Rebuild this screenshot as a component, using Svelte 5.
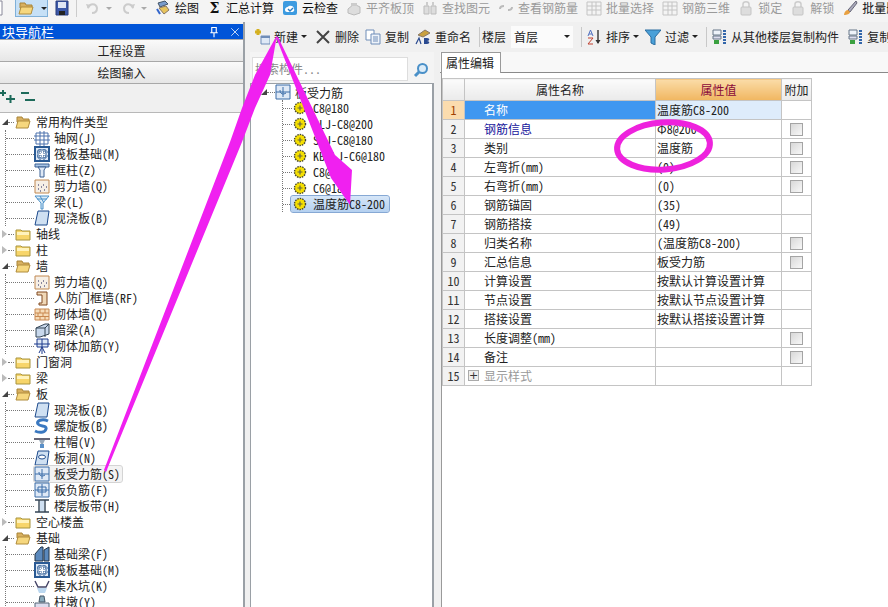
<script>
  const icons = {
    page: '<path d="M2 1h11v14H2z" fill="#fff" stroke="#889"/>',
    open: '<path d="M2 3h5l1 2h6v3H2z" fill="#d8b060" stroke="#a98436"/><path d="M1 14l2-7h12l-2 7z" fill="#f6d77e" stroke="#b08c3c"/>',
    closed: '<path d="M1 4h5l1 1h8v9H1z" fill="#f7d56a" stroke="#a8943f"/><path d="M2 6h12v3H2z" fill="#fff3bd"/>',
    save: '<path d="M2 1h12v14H2z" fill="#3c58a8" stroke="#283c7c"/><path d="M4 2h8v6H4z" fill="#dfe6f4"/><path d="M5 11h6v4H5z" fill="#222"/>',
    undo: '<path d="M3 8c2-5 8-5 9 0 0 3-2 5-5 5" fill="none" stroke="#ccc" stroke-width="2"/><path d="M1 4l5 1-3 4z" fill="#ccc"/>',
    redo: '<path d="M13 8c-2-5-8-5-9 0 0 3 2 5 5 5" fill="none" stroke="#ccc" stroke-width="2"/><path d="M15 4l-5 1 3 4z" fill="#ccc"/>',
    draw: '<path d="M3 3l7-2 3 3-8 3z" fill="#7a9ccc" stroke="#456"/><path d="M4 8l5 6 5-4-3-4z" fill="#e8c45c" stroke="#876"/><path d="M2 9l3 5" stroke="#36c" stroke-width="2"/>',
    cloud: '<rect x="1" y="1" width="14" height="14" rx="2" fill="#3d9be0"/><path d="M3 10c0-3 3-3 4-4 2-1 5 0 5 3 1 2-1 3-2 3H5c-1 0-2-1-2-2z" fill="#fff"/><path d="M6 9l2 2 3-3" fill="none" stroke="#2b7bc0" stroke-width="1.4"/>',
    dim: '<path d="M2 9l6-5 6 3v6l-6 2-6-2z" fill="#ddd" stroke="#bbb"/><path d="M5 3h6v3H5z" fill="#ccc"/>',
    bino: '<path d="M2 6h5v8H2zM9 6h5v8H9z" fill="#ddd" stroke="#bbb"/><path d="M4 2h2v4H4zM10 2h2v4h-2z" fill="#ccc"/>',
    link: '<path d="M2 9c0-3 3-3 4-3M14 7c0 3-3 3-4 3" fill="none" stroke="#bbb" stroke-width="2"/>',
    gridgrey: '<path d="M1 2h14v13H1zM1 6h14M1 10h14M6 2v13M10 2v13" fill="#f4f4f4" stroke="#c4c4c4"/>',
    lock: '<path d="M5 7V4c0-3 6-3 6 0v3" fill="none" stroke="#ccc" stroke-width="1.5"/><rect x="3" y="7" width="10" height="8" rx="1" fill="#ddd" stroke="#c4c4c4"/>',
    brush: '<path d="M14 1L6 10l2 2 7-9z" fill="#aab" stroke="#667"/><path d="M2 15c0-3 2-5 4-5l2 2c0 2-3 3-6 3z" fill="#e8a040"/>',
    add: '<path d="M1 3h6M4 0v6" stroke="#d4b020" stroke-width="3"/><path d="M7 7h9v8H7z" fill="#dfe9f6" stroke="#6f8db8"/><path d="M7 7h9v2H7z" fill="#6f8db8"/>',
    del: '<path d="M2 2l12 12M14 2L2 14" stroke="#444" stroke-width="2"/>',
    copy: '<path d="M1 1h8v10H1z" fill="#fff" stroke="#6f8db8"/><path d="M6 5h9v10H6z" fill="#eef3fa" stroke="#6f8db8"/><path d="M8 8h5M8 10h5M8 12h5" stroke="#6f8db8"/>',
    rename: '<path d="M3 6l7-5 5 3-7 4z" fill="#c8a040" stroke="#876"/><path d="M1 15l3-6 2 6" fill="none" stroke="#2a4a90" stroke-width="1.2"/><path d="M9 9h3c3 0 3 3 0 3 3 0 3 3 0 3H9z" fill="#2a4a90"/>',
    sort: '<path d="M2 7l2.500-6L7 7M3 5h3" fill="none" stroke="#5070c0"/><path d="M2 9h5l-5 6h5" fill="none" stroke="#c04030"/><path d="M12 1v13" stroke="#333" stroke-width="1.400"/><path d="M9.500 11l2.500 4 2.500-4z" fill="#333"/>',
    filter: '<path d="M0 1h16l-6 7v8l-4-2V8z" fill="#4aa0d8" stroke="#2a6ca0"/>',
    floor: '<path d="M2 1h8v5H2z" fill="#eef3fa" stroke="#678"/><path d="M2 7h8v3H2z" fill="#dde" stroke="#678"/><path d="M3 11h5v4H3z" fill="#3aa040"/><path d="M12 2h3M12 5h3M12 8h3M12 11h3M12 14h3" stroke="#36a" stroke-width="2"/>',
    net: '<path d="M2 3h12v11H2zM6 1v15M10 1v15M0 6h16M0 10h16" fill="none" stroke="#4a70ac"/>',
    raft: '<path d="M1 1h14v14H1z" fill="#dfe9f6" stroke="#2a5a94" stroke-width="2"/><path d="M4 4h8v8H4z" fill="#fff" stroke="#2a5a94"/><path d="M1 6h14M1 10h14M6 1v14M10 1v14" stroke="#2a5a94" stroke-dasharray="1 1"/>',
    col: '<path d="M1 2h14v3H1z" fill="#a8c4e4" stroke="#3a6094"/><path d="M4 5h8l-2 3v7H6V8z" fill="#dfe9f6" stroke="#3a6094"/>',
    wall: '<path d="M1 2h14v13H1z" fill="#f6efe6" stroke="#c08850"/><path d="M4 11h1M7 9h1M10 12h1M6 13h1M9 7h1M12 9h1M4 7h1" stroke="#668" stroke-width="1.500"/>',
    beam: '<path d="M1 2h14L9 9v6H7V9z" fill="#dcecf8" stroke="#4a90c8"/><path d="M3 5h10M6 2l4 7" stroke="#4a90c8"/>',
    slab: '<path d="M4 1h11l-2 14H1z" fill="#cfe0f2" stroke="#1d4a8c"/>',
    door: '<path d="M3 2h10v13H5v-2h3V5H3z" fill="#f0d8b8" stroke="#804820"/>',
    brick: '<path d="M1 3h14v11H1z" fill="#f6dcb8" stroke="#c88850"/><path d="M1 7h14M1 10.500h14M6 3v4M11 3v4M4 7v3.500M9 7v3.500M6 10.500V14M11 10.500V14" stroke="#c88850"/>',
    hbeam: '<path d="M2 6l9-4h4v10l-9 3H2z" fill="#c8d8ec" stroke="#345"/><path d="M2 6h9v9M11 6l4-4" fill="none" stroke="#345"/>',
    masonry: '<path d="M3 1h11v8H3z" fill="#dfe9f6" stroke="#1d3a8c"/><path d="M0 6h16M8 1v15M5 15l3-6 3 6" fill="none" stroke="#1d3a8c"/>',
    spiral: '<path d="M14 3C8 0 2 3 4 6s9 1 8 5-7 4-11 2" fill="none" stroke="#3a78c0" stroke-width="3"/>',
    cap: '<path d="M0 4h16v2H0z" fill="#667"/><path d="M5 6h6L9 10H7z" fill="#9ab"/><path d="M6 10h4v4H6z" fill="#5a90c8"/>',
    hole: '<path d="M4 1h11l-2 14H1z" fill="#cfe0f2" stroke="#1d4a8c"/><ellipse cx="8" cy="7" rx="3.500" ry="2" fill="#fff" stroke="#1d4a8c"/>',
    rebar: '<path d="M1 1h14v14H1z" fill="#dfe9f6" stroke="#3a6ca8"/><path d="M1 8h14M8 3v10" stroke="#3a6ca8"/><path d="M5 6c0 4 3 5 6 3" fill="none" stroke="#3a6ca8"/>',
    neg: '<path d="M1 1h14v14H1z" fill="#dfe9f6" stroke="#3a6ca8"/><path d="M4 5h8v5H4zM1 8h14M8 2v12" fill="none" stroke="#3a6ca8"/>',
    band: '<path d="M1 2h14M1 14h14M5 2v12M11 2v12" stroke="#345" stroke-width="1.400"/><path d="M6 3h4v10H6z" fill="#cfe0f2"/>',
    fbeam: '<path d="M1 15V8l6-7h2v14zM10 15V4l5-3v14z" fill="#5a88bc" stroke="#234"/>',
    pit: '<path d="M1 3l3 6h8l3-6" fill="none" stroke="#446" stroke-width="1.400"/><path d="M3 10h10l-2 5H5z" fill="#bcd8f0"/>',
    pier: '<path d="M6 2h4l1 6H5z" fill="#8ab" stroke="#456"/><path d="M1 9h14v6H1z" fill="#dde" stroke="#567"/>',
    gear: '<circle cx="8" cy="8" r="5.500" fill="#f6e000" stroke="#443" stroke-width="1.400" stroke-dasharray="1.500 1"/><path d="M5.500 8h5M8 5.500v5" stroke="#664" stroke-width="1.200"/>',
    search: '<circle cx="9.500" cy="6.500" r="4.500" fill="#dcecf8" stroke="#4a90c8" stroke-width="2"/><path d="M6 10l-4 4" stroke="#4a90c8" stroke-width="3"/>',
    pin: '<path d="M5 2h6v7H5zM3 9h10M8 9v6" fill="none" stroke="#fff" stroke-width="1.500"/>',
    close: '<path d="M3 3l10 10M13 3L3 13" stroke="#fff" stroke-width="1"/>',
    expand: '<path d="M0 4h6M3 1v6M6 10h9M10.500 6v8" stroke="#1d6a5a" stroke-width="2"/>',
    collapse: '<path d="M1 4h8M5 11h10" stroke="#1d6a5a" stroke-width="2"/>'
  };

  const topItems = [
    ['draw', '绘图', false], ['', '汇总计算', false], ['cloud', '云检查', false],
    ['dim', '平齐板顶', true], ['bino', '查找图元', true], ['link', '查看钢筋量', true],
    ['gridgrey', '批量选择', true], ['gridgrey', '钢筋三维', true], ['lock', '锁定', true],
    ['lock', '解锁', true], ['brush', '批量删除', false]
  ];

  const tree = [
    { label: '常用构件类型', open: true, items: [['net', '轴网(J)'], ['raft', '筏板基础(M)'], ['col', '框柱(Z)'], ['wall', '剪力墙(Q)'], ['beam', '梁(L)'], ['slab', '现浇板(B)']] },
    { label: '轴线' }, { label: '柱' },
    { label: '墙', open: true, items: [['wall', '剪力墙(Q)'], ['door', '人防门框墙(RF)'], ['brick', '砌体墙(Q)'], ['hbeam', '暗梁(A)'], ['masonry', '砌体加筋(Y)']] },
    { label: '门窗洞' }, { label: '梁' },
    { label: '板', open: true, items: [['slab', '现浇板(B)'], ['spiral', '螺旋板(B)'], ['cap', '柱帽(V)'], ['hole', '板洞(N)'], ['rebar', '板受力筋(S)', true], ['neg', '板负筋(F)'], ['band', '楼层板带(H)']] },
    { label: '空心楼盖' },
    { label: '基础', open: true, items: [['fbeam', '基础梁(F)'], ['raft', '筏板基础(M)'], ['pit', '集水坑(K)'], ['pier', '柱墩(Y)']] }
  ];

  const parts = ['C8@180', 'SLJ-C8@200', 'SLJ-C8@180', 'KBSLJ-C6@180', 'C8@180', 'C6@180'];

  const rows = [
    ['名称', '温度筋C8-200', false], ['钢筋信息', 'Φ8@200', true], ['类别', '温度筋', true],
    ['左弯折(mm)', '(0)', true], ['右弯折(mm)', '(0)', true], ['钢筋锚固', '(35)', false],
    ['钢筋搭接', '(49)', false], ['归类名称', '(温度筋C8-200)', true], ['汇总信息', '板受力筋', true],
    ['计算设置', '按默认计算设置计算', false], ['节点设置', '按默认节点设置计算', false], ['搭接设置', '按默认搭接设置计算', false],
    ['长度调整(mm)', '', true], ['备注', '', true], ['显示样式', '', false]
  ];
</script>

{#snippet icon(name)}
  <svg class="ic" viewBox="0 0 16 16">{@html icons[name]}</svg>
{/snippet}

<div class="app">
  <div class="topbar">
    <span class="stub">{@render icon('page')}</span>
    <span class="openbtn">{@render icon('open')}<i class="div"></i><i class="caret"></i></span>
    <span class="save">{@render icon('save')}</span>
    <i class="sep"></i>
    <span class="hist">{@render icon('undo')}<i class="caret pale"></i></span>
    <span class="hist">{@render icon('redo')}<i class="caret pale"></i></span>
    {#each topItems as [ic, label, off]}
      <span class="tool" class:off>
        {#if ic}{@render icon(ic)}{:else}<b class="sigma">Σ</b>{/if}
        {label}
      </span>
    {/each}
  </div>

  <div class="main">
    <aside class="nav">
      <div class="nav-title"><span>块导航栏</span><span class="nav-btns">{@render icon('pin')}{@render icon('close')}</span></div>
      <div class="nav-tab">工程设置</div>
      <div class="nav-tab">绘图输入</div>
      <div class="nav-tools">{@render icon('expand')}{@render icon('collapse')}</div>
      <div class="tree">
        {#each tree as group}
          <div class="folder">
            <i class="tri" class:down={group.open}></i><i class="stub-h short"></i>
            {@render icon(group.open ? 'open' : 'closed')}
            <span>{group.label}</span>
          </div>
          {#if group.open}
            <div class="kids">
              {#each group.items as [ic, label, hover]}
                <div class="kid">
                  <i class="stub-h"></i>
                  <span class="kid-body" class:hover>{@render icon(ic)}<span>{label}</span></span>
                </div>
              {/each}
            </div>
          {/if}
        {/each}
      </div>
    </aside>

    <div class="work">
      <div class="bar">
        <span class="t">{@render icon('add')}新建<i class="caret"></i></span>
        <span class="t">{@render icon('del')}删除</span>
        <span class="t">{@render icon('copy')}复制</span>
        <span class="t">{@render icon('rename')}重命名</span>
        <i class="sep2"></i>
        <span class="lbl">楼层</span>
        <span class="floor"><span>首层</span><i class="caret"></i></span>
        <i class="sep2 more"></i>
        <span class="t">{@render icon('sort')}排序<i class="caret"></i></span>
        <span class="t">{@render icon('filter')}过滤<i class="caret"></i></span>
        <i class="sep2 more"></i>
        <span class="t last">{@render icon('floor')}从其他楼层复制构件</span>
        <span class="t">{@render icon('floor')}复制构件到其他楼层</span>
      </div>

      <div class="panes">
        <section class="list">
          <div class="search">
            <span class="search-box">搜索构件...</span>
            <span class="search-btn">{@render icon('search')}</span>
          </div>
          <div class="list-tree">
            <div class="root"><i class="tri down"></i><i class="stub-h root-stub"></i>{@render icon('rebar')}<span>板受力筋</span></div>
            <div class="parts">
              {#each parts as p}
                <div class="part"><i class="stub-h"></i>{@render icon('gear')}<span>{p}</span></div>
              {/each}
              <div class="part"><i class="stub-h"></i><span class="part-sel">{@render icon('gear')}<span>温度筋C8-200</span></span></div>
            </div>
          </div>
        </section>

        <section class="props">
          <div class="tabs"><span class="tab">属性编辑</span></div>
          <div class="sheet">
            <table>
              <thead>
                <tr><th class="idx"></th><th class="nm">属性名称</th><th class="val">属性值</th><th class="ad">附加</th></tr>
              </thead>
              <tbody>
                {#each rows as [name, value, check], i}
                  <tr class:sel={i === 0}>
                    <td class="idx">{i + 1}</td>
                    <td class="nm" class:link={i === 1} class:muted={i === 14}>
                      {#if i === 14}<i class="plus">+</i>{/if}{name}
                    </td>
                    <td class="val">{value}</td>
                    <td class="ad">{#if check}<i class="check"></i>{/if}</td>
                  </tr>
                {/each}
              </tbody>
            </table>
          </div>
        </section>
      </div>
    </div>
  </div>

  <svg class="marks" viewBox="0 0 888 607">
    <path d="M277 35L270 75 255 108 242 142 106 472 104 470 230 142 242 108 255 75Z" fill="#f020f0" />
    <path d="M276 37L278 37 335 155 352 170 350 205 331 178 324 160Z" fill="#f020f0" />
    <ellipse cx="663.500" cy="146" rx="46.500" ry="23.500" transform="rotate(-4 663.500 146)" fill="none" stroke="#ee22dd" stroke-width="6" />
  </svg>
</div>

<style>
  :global(body) {
    margin: 0;
  }

  .app {
    position: relative;
    width: 888px;
    height: 607px;
    overflow: hidden;
    background: #f0f0f0;
    color: #222;
    font: 12px/16px "Noto Sans CJK SC", "Liberation Sans", sans-serif;
    font-feature-settings: "hwid";
  }

  i {
    font-style: normal;
  }

  .ic {
    width: 16px;
    height: 16px;
    flex: none;
    display: block;
  }

  .topbar {
    height: 22px;
    display: flex;
    align-items: flex-start;
    white-space: nowrap;
    background: #f4f4f4;
  }

  .topbar > * {
    flex: none;
  }

  .stub {
    margin: 0 10px 0 -11px;
  }

  .openbtn {
    width: 33px;
    height: 17px;
    box-sizing: border-box;
    display: flex;
    align-items: center;
    gap: 2px;
    padding-left: 2px;
    background: #c6e0f6;
    border: 1px solid #7fb0d8;
    border-top: 0;
  }

  .div {
    width: 1px;
    height: 16px;
    background: #7fb0d8;
    margin-right: 3px;
  }

  .caret {
    width: 0;
    height: 0;
    flex: none;
    border: 3px solid transparent;
    border-top: 3px solid #222;
    border-bottom: 0;
  }

  .caret.pale {
    border-top-color: #aaa;
  }

  .save {
    margin: 0 6px;
  }

  .sep {
    width: 1px;
    height: 17px;
    background: #ccc;
    margin-right: 8px;
  }

  .hist {
    width: 35px;
    display: flex;
    align-items: center;
    gap: 5px;
    height: 16px;
  }

  .tool {
    display: flex;
    align-items: center;
    gap: 4px;
    height: 16px;
    margin-right: 8px;
    color: #111;
  }

  .tool.off {
    color: #9a9a9a;
  }

  .sigma {
    width: 15px;
    text-align: center;
    font: bold 14px/16px "DejaVu Serif", serif;
  }

  .main {
    display: flex;
    height: 585px;
  }

  .nav {
    width: 243px;
    flex: none;
    display: flex;
    flex-direction: column;
    border-right: 2px solid #9aa0a6;
  }

  .nav-title {
    margin-top: 2px;
    height: 15px;
    flex: none;
    background: #0054d8;
    color: #fff;
    display: flex;
    justify-content: space-between;
    align-items: center;
    padding-left: 2px;
    font-size: 13px;
  }

  .nav-btns {
    display: flex;
    gap: 9px;
    padding-right: 2px;
  }

  .nav-btns .ic {
    width: 12px;
    height: 12px;
  }

  .nav-tab {
    height: 21px;
    flex: none;
    text-align: center;
    line-height: 21px;
    background: linear-gradient(#fafafa, #e6e6e6);
    border-top: 1px solid #a8a8a8;
    color: #222;
  }

  .nav-tools {
    height: 30px;
    flex: none;
    box-sizing: border-box;
    border-top: 1px solid #a8a8a8;
    border-bottom: 1px solid #b8b8b8;
    display: flex;
    align-items: center;
    gap: 4px;
    padding: 0 0 2px 0;
  }

  .tree {
    flex: 1;
    background: #fff;
    padding-top: 1px;
    overflow: hidden;
  }

  .folder,
  .kid,
  .root,
  .part {
    height: 16px;
    display: flex;
    align-items: center;
    white-space: nowrap;
  }

  .folder {
    padding-left: 2px;
  }

  .folder > span {
    margin-left: 5px;
  }

  .tri {
    width: 0;
    height: 0;
    flex: none;
    border-left: 5px solid #bbb;
    border-top: 4px solid transparent;
    border-bottom: 4px solid transparent;
    margin-right: 1px;
  }

  .tri.down {
    border: 0;
    border-bottom: 6px solid #444;
    border-left: 6px solid transparent;
    margin-right: 0;
  }

  .stub-h {
    height: 0;
    flex: 1;
    border-bottom: 1px dotted #777;
  }

  .stub-h.short {
    flex: none;
    width: 6px;
    margin-right: 1px;
  }

  .kids {
    margin-left: 5px;
    border-left: 1px dotted #777;
  }

  .kid .stub-h {
    flex: none;
    width: 28px;
  }

  .kid-body {
    display: flex;
    align-items: center;
    gap: 4px;
    height: 16px;
    padding-right: 2px;
  }

  .kid-body.hover {
    background: #f3f3f3;
    outline: 1px solid #d4d4d4;
    border-radius: 2px;
  }

  .work {
    flex: 1;
    min-width: 0;
    display: flex;
    flex-direction: column;
    padding-left: 5px;
  }

  .bar {
    height: 29px;
    flex: none;
    display: flex;
    align-items: center;
    padding-left: 4px;
    white-space: nowrap;
    margin-bottom: 1px;
  }

  .bar > * {
    flex: none;
  }

  .t {
    display: flex;
    align-items: center;
    gap: 4px;
    margin-right: 6px;
  }

  .t .caret {
    margin-left: -1px;
  }

  .t:first-child {
    margin-right: 8px;
  }

  .t.last {
    margin-right: 8px;
  }

  .sep2 {
    width: 1px;
    height: 20px;
    background: #c8c8c8;
    margin: 0 2px;
  }

  .sep2.more {
    margin-right: 4px;
  }

  .floor {
    width: 62px;
    height: 22px;
    box-sizing: border-box;
    margin: 0 6px 0 5px;
    padding: 0 3px;
    background: #fbfbfb;
    display: flex;
    align-items: center;
    justify-content: space-between;
  }

  .panes {
    flex: 1;
    display: flex;
    min-height: 0;
  }

  .list {
    width: 184px;
    flex: none;
    display: flex;
    flex-direction: column;
    margin-right: 6px;
  }

  .search {
    height: 31px;
    flex: none;
    display: flex;
    padding: 5px 0 0 2px;
    box-sizing: border-box;
    background: #f4f4f4;
  }

  .search-box {
    width: 156px;
    height: 24px;
    box-sizing: border-box;
    padding: 3px 0 0 2px;
    background: #fff;
    border: 1px solid #ddd;
    color: #888;
  }

  .search-btn {
    flex: 1;
    display: flex;
    align-items: center;
    justify-content: center;
  }

  .list-tree {
    flex: 1;
    background: #fff;
    border: 1px solid #9aa0a6;
    border-width: 1px 2px 0 1px;
  }

  .root {
    padding-left: 10px;
  }

  .root > span {
    margin-left: 4px;
    padding-top: 2px;
  }

  .root-stub {
    flex: none;
    width: 8px;
  }

  .parts {
    margin-left: 31px;
    border-left: 1px dotted #777;
  }

  .part .stub-h {
    flex: none;
    width: 9px;
  }

  .part > span:not(.part-sel) {
    margin-left: 5px;
  }

  .part-sel {
    display: flex;
    align-items: center;
    height: 16px;
    gap: 5px;
    margin-left: -1px;
    padding: 0 4px 0 1px;
    background: linear-gradient(#d6e6f8, #b4d0f0);
    outline: 1px solid #86a8d4;
    border-radius: 2px;
  }

  .props {
    flex: 1;
    min-width: 0;
    display: flex;
    flex-direction: column;
  }

  .tabs {
    height: 21px;
    flex: none;
    box-sizing: border-box;
    border-bottom: 1px solid #8a8a8a;
    background: #f8f8f8;
  }

  .tab {
    display: block;
    width: 60px;
    height: 21px;
    box-sizing: border-box;
    margin-left: 1px;
    padding-left: 4px;
    line-height: 20px;
    background: #fff;
    border: 1px solid #9a9a9a;
    border-bottom: 0;
  }

  .sheet {
    flex: 1;
    background: #fff;
    border-left: 1px solid #9a9a9a;
    margin-left: 1px;
    padding: 5px 0 0 0;
  }

  table {
    border-collapse: collapse;
    table-layout: fixed;
    width: 370px;
  }

  th,
  td {
    border: 1px solid #c4c4c4;
    padding: 0;
    font-weight: normal;
    height: 18px;
    line-height: 16px;
    white-space: nowrap;
    overflow: hidden;
  }

  th {
    height: 21px;
    background: linear-gradient(#fbfbfb, #eaeaea);
  }

  th.val {
    background: linear-gradient(#fbdca8, #f0b660);
    color: #8a0a3a;
  }

  th.idx,
  td.idx {
    width: 21px;
  }

  th.nm {
    width: 190px;
  }

  th.val {
    width: 125px;
  }

  td.idx {
    background: #f2f2f2;
    text-align: center;
    color: #333;
  }

  td.nm {
    padding-left: 19px;
    position: relative;
  }

  td.val {
    padding-left: 1px;
  }

  td.ad {
    text-align: center;
  }

  .sel td.idx {
    background: #fbdcae;
    color: #a04000;
  }

  .sel td.nm {
    background: #3f97f0;
    color: #fff;
  }

  .sel td.val {
    background: #deecfb;
  }

  .link {
    color: #16169c;
  }

  .muted {
    color: #999;
  }

  .plus {
    position: absolute;
    left: 3px;
    top: 3px;
    width: 9px;
    height: 9px;
    border: 1px solid #aaa;
    background: #eee;
    color: #333;
    font: 11px/9px "DejaVu Sans", sans-serif;
    text-align: center;
  }

  .check {
    display: block;
    width: 11px;
    height: 11px;
    margin: 0 auto;
    border: 1px solid #a4a4a4;
    background: linear-gradient(135deg, #d8d8d8, #f8f8f8);
  }

  .marks {
    position: absolute;
    left: 0;
    top: 0;
    width: 888px;
    height: 607px;
    pointer-events: none;
  }
</style>
